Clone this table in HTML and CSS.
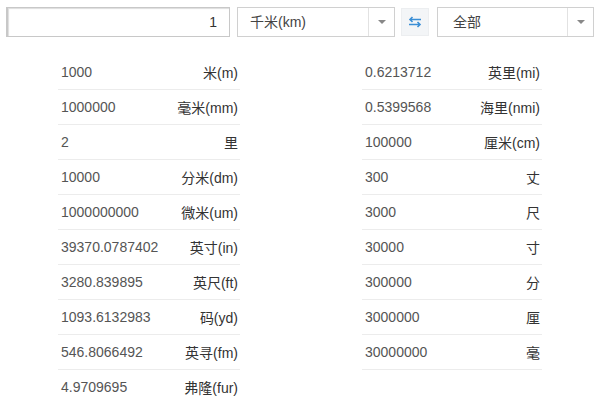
FILE: index.html
```html
<!DOCTYPE html>
<html lang="zh">
<head>
<meta charset="utf-8">
<link rel="stylesheet" href="styles.css">
</head>
<body>
<div class="bar">
  <div class="input">1</div>
  <div class="select sel1"><span class="val">千米(km)</span><span class="drop"><span class="caret"></span></span></div>
  <div class="swap">
    <svg width="14" height="12" viewBox="0 0 14 12"><path d="M13 3.5H2M4.5 1 2 3.5 4.5 6" fill="none" stroke="#3b8fd6" stroke-width="1.6"/><path d="M1 8.5H12M9.5 6 12 8.5 9.5 11" fill="none" stroke="#3b8fd6" stroke-width="1.6"/></svg>
  </div>
  <div class="select sel2"><span class="val">全部</span><span class="drop"><span class="caret"></span></span></div>
</div>
<div class="cols">
  <div class="col">
    <div class="row"><span>1000</span><span>米(m)</span></div>
    <div class="row"><span>1000000</span><span>毫米(mm)</span></div>
    <div class="row"><span>2</span><span>里</span></div>
    <div class="row"><span>10000</span><span>分米(dm)</span></div>
    <div class="row"><span>1000000000</span><span>微米(um)</span></div>
    <div class="row"><span>39370.0787402</span><span>英寸(in)</span></div>
    <div class="row"><span>3280.839895</span><span>英尺(ft)</span></div>
    <div class="row"><span>1093.6132983</span><span>码(yd)</span></div>
    <div class="row"><span>546.8066492</span><span>英寻(fm)</span></div>
    <div class="row"><span>4.9709695</span><span>弗隆(fur)</span></div>
  </div>
  <div class="col">
    <div class="row"><span>0.6213712</span><span>英里(mi)</span></div>
    <div class="row"><span>0.5399568</span><span>海里(nmi)</span></div>
    <div class="row"><span>100000</span><span>厘米(cm)</span></div>
    <div class="row"><span>300</span><span>丈</span></div>
    <div class="row"><span>3000</span><span>尺</span></div>
    <div class="row"><span>30000</span><span>寸</span></div>
    <div class="row"><span>300000</span><span>分</span></div>
    <div class="row"><span>3000000</span><span>厘</span></div>
    <div class="row"><span>30000000</span><span>毫</span></div>
  </div>
</div>
</body>
</html>
```
FILE: styles.css
```css
html, body {
  margin: 0;
  padding: 0;
  background: #fff;
  font-family: "Liberation Sans", "Noto Sans CJK SC", sans-serif;
  color: #444;
  overflow: hidden;
}
.bar {
  display: flex;
  align-items: center;
  padding: 7px 0 0 6px;
  height: 30px;
}
.input {
  box-sizing: border-box;
  width: 224px;
  height: 30px;
  border: 1px solid #c8c8c8;
  border-left: 2px solid #c8c8c8;
  box-shadow: inset 1px 1px 1px #ddd;
  text-align: right;
  font-size: 14px;
  line-height: 28px;
  padding-right: 12px;
  color: #333;
}
.select {
  box-sizing: border-box;
  height: 30px;
  border: 1px solid #d0d0d0;
  display: flex;
  align-items: stretch;
  font-size: 14px;
  color: #444;
}
.sel1 { width: 158px; margin-left: 7px; }
.sel2 { width: 157px; margin-left: 8px; }
.val { flex: 1; line-height: 28px; padding-left: 12px; }
.sel2 .val { padding-left: 15px; }
.drop {
  width: 25px;
  border-left: 1px solid #e2e2e2;
  display: flex;
  align-items: center;
  justify-content: center;
}
.caret {
  width: 0; height: 0;
  border-left: 4px solid transparent;
  border-right: 4px solid transparent;
  border-top: 4px solid #888;
}
.swap {
  box-sizing: border-box;
  width: 28px;
  height: 28px;
  margin-left: 6px;
  background: #f3f5f7;
  border: 1px solid #eceef0;
  display: flex;
  align-items: center;
  justify-content: center;
}
.cols {
  display: grid;
  grid-template-columns: 182px 180px;
  column-gap: 122px;
  padding: 18px 0 0 58px;
}
.row {
  height: 35px;
  box-sizing: border-box;
  border-bottom: 1px solid #ececec;
  display: flex;
  justify-content: space-between;
  align-items: center;
  font-size: 14px;
  padding: 0 2px 0 3px;
  color: #444;
}
.row span:first-child { color: #555; }
.row span:last-child { color: #333; }
```
